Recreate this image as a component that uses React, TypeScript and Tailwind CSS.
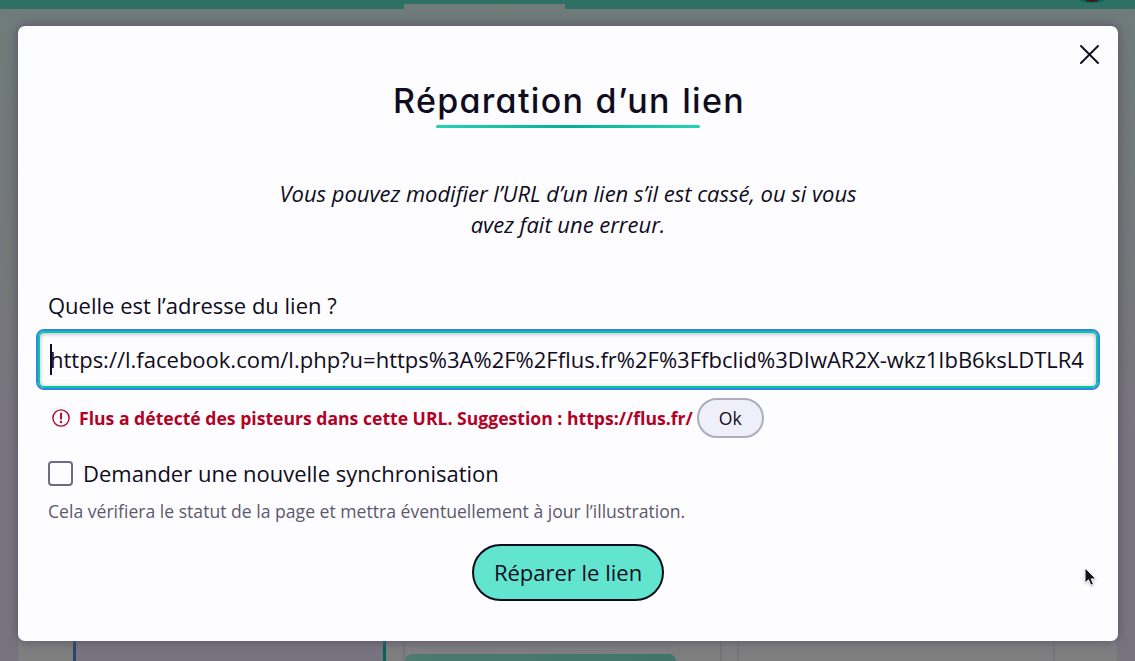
function PageBehind() {
  return (
    <div className="flex h-full flex-col bg-linear-to-b from-[#6f7c7a] via-[#76777a] via-45% to-[#78747f] to-70%">
      <header className="flex h-[9px] shrink-0 items-end justify-between bg-[#2f7064] pl-[404px]">
        <div className="h-[5px] w-[161px] bg-[#717c79]" />
        <div className="mr-[31px] h-[9px] w-6">
          <svg viewBox="0 0 24 9" className="h-[9px] w-6">
            <ellipse cx="12" cy="0" rx="12" ry="3" fill="#006b58" />
            <ellipse cx="12" cy="0" rx="7" ry="1.8" fill="#4a1512" />
          </svg>
        </div>
      </header>
      <main className="mx-[17px] mt-auto flex h-[60px] border-x border-[#747279] bg-[#7f7f7f] pl-[55px]">
        <div className="w-[313px] shrink-0 border-x-[3px] border-l-[#24496a] border-r-[#006558] bg-[#78747f]" />
        <div className="ml-[18px] flex w-[317px] shrink-0 items-end border-x border-[#737179] bg-[#7f7f7f] shadow-[0_0_3px_#72707a]">
          <div className="h-[7px] w-[271px] rounded-t-lg bg-linear-to-r from-[#4e7a70] to-[#40756b]" />
        </div>
        <div className="ml-[17px] w-[316px] shrink-0 border-x border-[#737179] bg-[#7f7f7f] shadow-[0_0_3px_#72707a]" />
      </main>
    </div>
  );
}

function RepairForm() {
  return (
    <form className="flex flex-col">
      <label htmlFor="url" className="mt-12 ml-[30px] h-[34px] text-[22px] leading-[34px]">
        Quelle est l’adresse du lien ?
      </label>
      <div
        id="url"
        className="mx-5 mt-[9px] flex h-[57px] items-center overflow-hidden rounded-[6px] border-2 border-[#00cba5] bg-[#fdfdff] pl-2.5 shadow-[inset_0_1px_4px_#b5b2c4] outline-2 outline-[#3584e4]"
      >
        <span className="h-[31px] w-0.5 shrink-0 bg-[#100c20]" />
        <span className="-ml-0.5 text-[22px] whitespace-nowrap">
          https://l.facebook.com/l.php?u=https%3A%2F%2Fflus.fr%2F%3Ffbclid%3DIwAR2X-wkz1IbB6ksLDTLR4
        </span>
      </div>
      <div className="mt-2.5 ml-[34px] flex h-10 items-center text-[17.6px] font-bold text-[#b40024]">
        <svg viewBox="0 0 18 18" className="mr-[9px] h-[18px] w-[18px]" fill="none" stroke="currentColor" strokeWidth="1.4">
          <circle cx="9" cy="9" r="8.1" />
          <path d="M9 4.500v5.300" strokeWidth="1.9" strokeLinecap="round" />
          <circle cx="9" cy="13" r="1.2" fill="currentColor" stroke="none" />
        </svg>
        <span className="whitespace-nowrap">
          Flus a détecté des pisteurs dans cette URL. Suggestion : https://flus.fr/
        </span>
        <button
          type="button"
          className="ml-1 h-10 w-[67px] rounded-full border-2 border-[#aeabbf] bg-[#efeff9] font-normal text-[#100c20]"
        >
          Ok
        </button>
      </div>
      <div className="mt-[18px] ml-[30px] flex h-[34px] items-center">
        <span className="mr-2.5 h-[25px] w-[25px] rounded-[4px] border-2 border-[#6f6b82]" />
        <span className="text-[22px]">Demander une nouvelle synchronisation</span>
      </div>
      <p className="mt-2 ml-[30px] h-[26px] text-[17.6px] leading-[26px] text-[#5c586c]">
        Cela vérifiera le statut de la page et mettra éventuellement à jour l’illustration.
      </p>
      <button
        type="button"
        className="mt-5 h-[57px] w-48 self-center rounded-full border-2 border-[#100c20] bg-[#62e5cf] text-[22px]"
      >
        Réparer le lien
      </button>
    </form>
  );
}

export default function App() {
  return (
    <div className="relative h-[661px] w-[1135px] overflow-hidden font-['Open_Sans','Noto_Sans',sans-serif] text-[#100c20]">
      <PageBehind />
      <section className="absolute top-[26px] left-[18px] flex h-[615px] w-[1100px] flex-col rounded-[7px] bg-[#fdfdff] shadow-[0_0_12px_#56516a]">
        <button type="button" className="mt-[19px] mr-[19px] h-[19px] w-[19px] self-end">
          <svg viewBox="0 0 19 19" className="h-[19px] w-[19px]" stroke="#100c20" strokeWidth="1.9" strokeLinecap="round">
            <path d="M1 1l17 17M18 1L1 18" />
          </svg>
        </button>
        <h1 className="mt-[13px] flex h-[48px] items-center justify-center pb-0.5 pl-0.5 font-['Inter',sans-serif] text-[34px] font-medium tracking-[1.3px] [word-spacing:1px] whitespace-nowrap [font-feature-settings:'cv11']">
          Réparation d’un lien
        </h1>
        <div className="h-[3px] w-[264px] self-center rounded-full bg-linear-to-r from-[#22d3b4] via-[#00b294] to-[#22d3b4]" />
        <p className="mt-[50px] h-[62px] w-[600px] self-center text-center text-[22px] leading-[31px] tracking-[-0.02px] italic">
          Vous pouvez modifier l’URL d’un lien s’il est cassé, ou si vous
          <br />
          avez fait une erreur.
        </p>
        <RepairForm />
      </section>
      <svg viewBox="0 0 14 20" className="absolute top-[567px] left-[1084px] h-5 w-3.5 drop-shadow-[0_1px_1px_#88888888]">
        <path d="M1 1v15l3.500-3.200 2.300 5.500 2.700-1.100-2.300-5.300h4.700z" fill="#151515" stroke="#fff" strokeWidth="1" />
      </svg>
    </div>
  );
}
